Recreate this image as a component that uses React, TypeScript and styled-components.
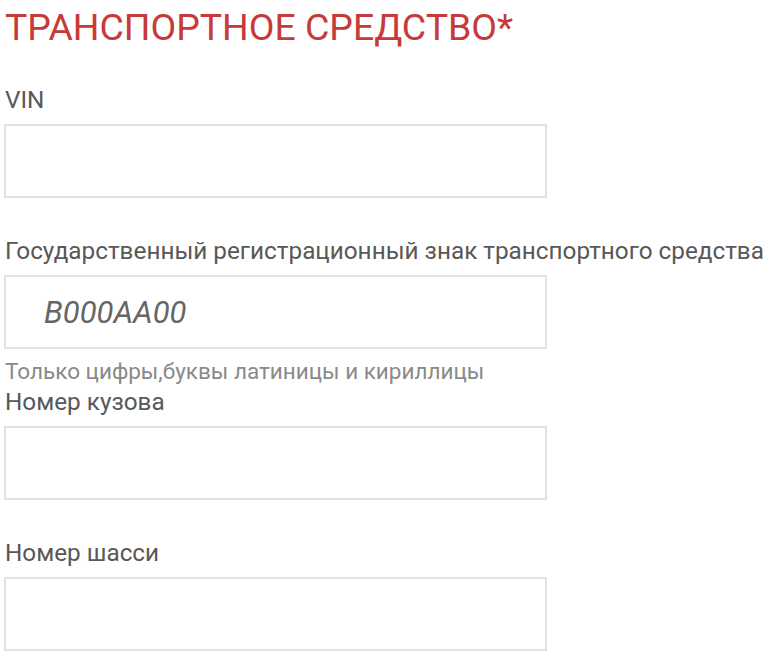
import React from "react";
import styled, { createGlobalStyle } from "styled-components";

const Global = createGlobalStyle`
  html, body { margin: 0; padding: 0; background: #ffffff; }
  body { font-family: Roboto, "Noto Sans", Arial, sans-serif; }
`;

const Page = styled.div`
  padding: 0 0 0 4px;
  display: flex;
  flex-direction: column;
`;

const Title = styled.h2`
  margin: 0;
  padding: 4px 0 0 1px;
  font-weight: 400;
  font-size: 37.4px;
  line-height: 46px;
  color: #c63a39;
  white-space: nowrap;
`;

const Field = styled.div<{ $top: number }>`
  display: flex;
  flex-direction: column;
  margin-top: ${(p) => p.$top}px;
`;

const Label = styled.label`
  font-size: 24.3px;
  line-height: 28px;
  color: #585858;
  padding-left: 1px;
  margin-bottom: 10px;
  white-space: nowrap;
`;

const Input = styled.input`
  box-sizing: border-box;
  width: 543px;
  height: 74px;
  border: 2px solid #e2e2e2;
  background: #fff;
  outline: none;
  padding: 0 0 0 38px;
  font-family: Roboto, Arial, sans-serif;
  font-size: 31px;
  font-style: italic;
  color: #555;
  &::placeholder {
    color: #666666;
    font-style: italic;
  }
`;

const Hint = styled.div`
  font-size: 22.5px;
  line-height: 26px;
  color: #8a8a8a;
  padding-left: 1px;
  margin-top: 9px;
  white-space: nowrap;
`;

export default function App() {
  return (
    <>
      <Global />
      <Page>
        <Title>ТРАНСПОРТНОЕ СРЕДСТВО*</Title>
        <Field $top={36}>
          <Label>VIN</Label>
          <Input />
        </Field>
        <Field $top={39}>
          <Label>Государственный регистрационный знак транспортного средства</Label>
          <Input placeholder="B000AA00" />
          <Hint>Только цифры,буквы латиницы и кириллицы</Hint>
        </Field>
        <Field $top={4}>
          <Label>Номер кузова</Label>
          <Input />
        </Field>
        <Field $top={39}>
          <Label>Номер шасси</Label>
          <Input />
        </Field>
      </Page>
    </>
  );
}
